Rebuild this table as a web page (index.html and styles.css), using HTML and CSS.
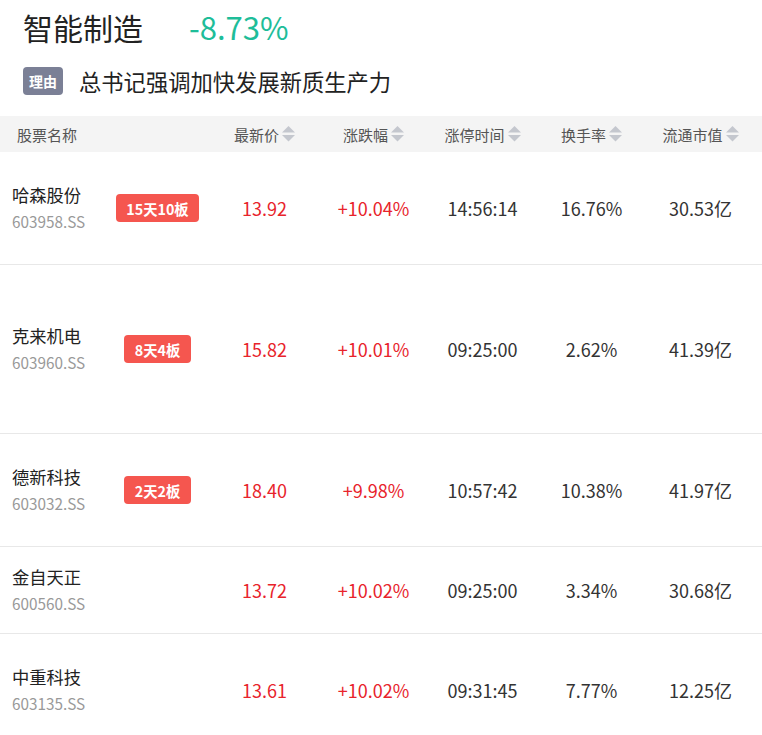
FILE: index.html
```html
<!DOCTYPE html>
<html lang="zh-CN">
<head>
<meta charset="utf-8">
<title>智能制造</title>
<link rel="stylesheet" href="styles.css">
</head>
<body>
<div class="page">
  <div class="title-row">
    <span class="title">智能制造</span>
    <span class="change">-8.73%</span>
  </div>
  <div class="reason-row">
    <span class="reason-tag">理由</span>
    <span class="reason-text">总书记强调加快发展新质生产力</span>
  </div>

  <div class="table">
    <div class="thead grid">
      <div class="th th-name">股票名称</div>
      <div class="th">最新价<svg class="sort" viewBox="0 0 13 16"><path d="M6.5 0L13 6.5H0Z"/><path d="M0 9H13L6.5 15.5Z"/></svg></div>
      <div class="th">涨跌幅<svg class="sort" viewBox="0 0 13 16"><path d="M6.5 0L13 6.5H0Z"/><path d="M0 9H13L6.5 15.5Z"/></svg></div>
      <div class="th">涨停时间<svg class="sort" viewBox="0 0 13 16"><path d="M6.5 0L13 6.5H0Z"/><path d="M0 9H13L6.5 15.5Z"/></svg></div>
      <div class="th">换手率<svg class="sort" viewBox="0 0 13 16"><path d="M6.5 0L13 6.5H0Z"/><path d="M0 9H13L6.5 15.5Z"/></svg></div>
      <div class="th">流通市值<svg class="sort" viewBox="0 0 13 16"><path d="M6.5 0L13 6.5H0Z"/><path d="M0 9H13L6.5 15.5Z"/></svg></div>
    </div>

    <div class="trow grid row-112">
      <div class="stock"><div class="name">哈森股份</div><div class="code">603958.SS</div></div>
      <div class="tag-cell"><span class="tag">15天10板</span></div>
      <div class="td up">13.92</div>
      <div class="td up">+10.04%</div>
      <div class="td">14:56:14</div>
      <div class="td">16.76%</div>
      <div class="td">30.53亿</div>
    </div>

    <div class="trow grid row-168">
      <div class="stock"><div class="name">克来机电</div><div class="code">603960.SS</div></div>
      <div class="tag-cell"><span class="tag">8天4板</span></div>
      <div class="td up">15.82</div>
      <div class="td up">+10.01%</div>
      <div class="td">09:25:00</div>
      <div class="td">2.62%</div>
      <div class="td">41.39亿</div>
    </div>

    <div class="trow grid row-112">
      <div class="stock"><div class="name">德新科技</div><div class="code">603032.SS</div></div>
      <div class="tag-cell"><span class="tag">2天2板</span></div>
      <div class="td up">18.40</div>
      <div class="td up">+9.98%</div>
      <div class="td">10:57:42</div>
      <div class="td">10.38%</div>
      <div class="td">41.97亿</div>
    </div>

    <div class="trow grid row-86">
      <div class="stock"><div class="name">金自天正</div><div class="code">600560.SS</div></div>
      <div class="tag-cell"></div>
      <div class="td up">13.72</div>
      <div class="td up">+10.02%</div>
      <div class="td">09:25:00</div>
      <div class="td">3.34%</div>
      <div class="td">30.68亿</div>
    </div>

    <div class="trow grid row-112">
      <div class="stock"><div class="name">中重科技</div><div class="code">603135.SS</div></div>
      <div class="tag-cell"></div>
      <div class="td up">13.61</div>
      <div class="td up">+10.02%</div>
      <div class="td">09:31:45</div>
      <div class="td">7.77%</div>
      <div class="td">12.25亿</div>
    </div>
  </div>
</div>
</body>
</html>
```

FILE: styles.css
```css
* { box-sizing: border-box; }

html, body {
  margin: 0;
  padding: 0;
  background: #ffffff;
}

body {
  font-family: "Noto Sans CJK SC", "Noto Sans", sans-serif;
  color: #333333;
  width: 762px;
  overflow: hidden;
}

.page {
  display: flex;
  flex-direction: column;
}

.title-row {
  display: flex;
  align-items: center;
  height: 54px;
  padding-left: 23px;
}

.title {
  font-size: 30px;
  line-height: 40px;
  color: #222222;
}

.change {
  font-size: 31px;
  line-height: 40px;
  color: #1ebd99;
  margin-left: 46px;
}

.reason-row {
  display: flex;
  align-items: center;
  height: 54px;
  padding-left: 23px;
}

.reason-tag {
  display: inline-flex;
  align-items: center;
  justify-content: center;
  width: 40px;
  height: 28px;
  border-radius: 4px;
  background: #7b8096;
  color: #ffffff;
  font-size: 14px;
  font-weight: 700;
}

.reason-text {
  margin-left: 16px;
  font-size: 22.3px;
  line-height: 30px;
  color: #222222;
}

.table {
  margin-top: 8px;
}

.grid {
  display: grid;
  grid-template-columns: 105px 105px repeat(5, 109px);
}

.thead {
  background: #f4f4f4;
  height: 36px;
  align-items: center;
}

.th {
  display: flex;
  align-items: center;
  justify-content: center;
  font-size: 15px;
  color: #555555;
}

.th-name {
  grid-column: span 2;
  justify-content: flex-start;
  padding-left: 17px;
}

.sort {
  width: 13px;
  height: 16px;
  margin-left: 3px;
  fill: #c4c7ce;
}

.trow {
  align-items: center;
  border-bottom: 1px solid #e8e8e8;
}

.row-112 { height: 113px; }
.row-168 { height: 169px; }
.row-86 { height: 87px; }

.stock {
  padding-left: 12px;
  display: flex;
  flex-direction: column;
}

.name {
  font-size: 17.3px;
  line-height: 27px;
  color: #222222;
}

.code {
  font-size: 15.3px;
  line-height: 27px;
  color: #999999;
}

.tag-cell {
  display: flex;
  justify-content: center;
}

.tag {
  display: inline-flex;
  align-items: center;
  height: 28px;
  padding: 0 10.5px;
  border-radius: 4px;
  background: #f5564f;
  color: #ffffff;
  font-size: 14.3px;
  font-weight: 700;
}

.td {
  text-align: center;
  font-size: 18px;
  color: #333333;
}

.td.up {
  color: #e8232b;
}
```
